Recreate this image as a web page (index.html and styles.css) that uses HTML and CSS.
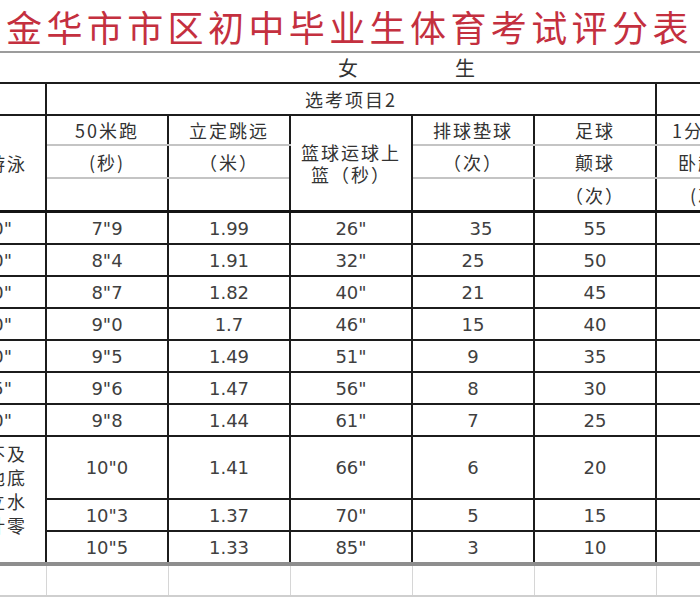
FILE: index.html
```html
<!DOCTYPE html>
<html lang="zh">
<head>
<meta charset="utf-8">
<title>金华市市区初中毕业生体育考试评分表</title>
<link rel="stylesheet" href="styles.css">
</head>
<body>
<div class="sheet">
  <h1 class="title">金华市市区初中毕业生体育考试评分表</h1>
  <table class="grid">
    <colgroup>
      <col class="c-first"><col class="c-mid"><col class="c-mid"><col class="c-mid"><col class="c-mid"><col class="c-mid"><col class="c-last">
    </colgroup>
    <tr class="r-gender">
      <td colspan="7" class="gender"><span class="g-char">女</span><span class="g-char">生</span></td>
    </tr>
    <tr class="r-group">
      <td></td>
      <td colspan="5" class="cjk">选考项目2</td>
      <td></td>
    </tr>
    <tr class="r-ha">
      <td rowspan="3" class="cjk first-head hdr-end">游泳</td>
      <td class="cjk">50米跑</td>
      <td class="cjk">立定跳远</td>
      <td rowspan="3" class="cjk two-line hdr-end">篮球运球上<br>篮（秒）</td>
      <td class="cjk">排球垫球</td>
      <td class="cjk">足球</td>
      <td class="cjk">1分钟仰</td>
    </tr>
    <tr class="r-hb">
      <td class="cjk">(秒)</td>
      <td class="cjk">（米）</td>
      <td class="cjk">（次）</td>
      <td class="cjk">颠球</td>
      <td class="cjk">卧起坐</td>
    </tr>
    <tr class="r-hc">
      <td></td>
      <td></td>
      <td></td>
      <td class="cjk">（次）</td>
      <td class="cjk">(次)</td>
    </tr>
    <tr class="r-data"><td class="first">1'00"</td><td>7"9</td><td>1.99</td><td>26"</td><td class="shift">35</td><td>55</td><td></td></tr>
    <tr class="r-data"><td class="first">1'10"</td><td>8"4</td><td>1.91</td><td>32"</td><td>25</td><td>50</td><td></td></tr>
    <tr class="r-data"><td class="first">1'20"</td><td>8"7</td><td>1.82</td><td>40"</td><td>21</td><td>45</td><td></td></tr>
    <tr class="r-data"><td class="first">1'30"</td><td>9"0</td><td>1.7</td><td>46"</td><td>15</td><td>40</td><td></td></tr>
    <tr class="r-data"><td class="first">1'40"</td><td>9"5</td><td>1.49</td><td>51"</td><td>9</td><td>35</td><td></td></tr>
    <tr class="r-data"><td class="first">1'45"</td><td>9"6</td><td>1.47</td><td>56"</td><td>8</td><td>30</td><td></td></tr>
    <tr class="r-data"><td class="first">1'50"</td><td>9"8</td><td>1.44</td><td>61"</td><td>7</td><td>25</td><td></td></tr>
    <tr class="r-tall">
      <td rowspan="3" class="cjk first-note">途中不及<br>手触池底<br>或站立水<br>中者计零</td>
      <td>10"0</td><td>1.41</td><td>66"</td><td>6</td><td>20</td><td></td>
    </tr>
    <tr class="r-data"><td>10"3</td><td>1.37</td><td>70"</td><td>5</td><td>15</td><td></td></tr>
    <tr class="r-data"><td>10"5</td><td>1.33</td><td>85"</td><td>3</td><td>10</td><td></td></tr>
    <tr class="r-empty"><td></td><td></td><td></td><td></td><td></td><td></td><td></td></tr>
  </table>
</div>
</body>
</html>
```

FILE: styles.css
```css
html, body {
  margin: 0;
  padding: 0;
  background: #ffffff;
}

body {
  font-family: "DejaVu Sans", "Noto Sans CJK SC", sans-serif;
  color: #404040;
}

.sheet {
  width: 700px;
  height: 600px;
  overflow: hidden;
  background: #ffffff;
}

.title {
  margin: 0;
  height: 51px;
  padding: 2px 0 0 6px;
  box-sizing: border-box;
  font-family: "Noto Sans CJK SC", sans-serif;
  font-weight: 400;
  font-size: 36px;
  line-height: 48px;
  letter-spacing: 4.4px;
  color: #c4303f;
  white-space: nowrap;
}

.grid {
  border-collapse: collapse;
  table-layout: fixed;
  width: 836px;
  margin-left: -77px;
}

.c-first, .c-mid { width: 122px; }
.c-last { width: 104px; }

.grid td {
  border: 2px solid #1c1c1c;
  padding: 0;
  text-align: center;
  vertical-align: middle;
  font-size: 18px;
  white-space: nowrap;
  overflow: hidden;
}

.grid td.cjk {
  font-family: "Noto Sans CJK SC", sans-serif;
  letter-spacing: 2px;
  color: #333333;
}

/* gender row */
.r-gender td {
  height: 29px;
  border-top: 2px solid #9c9c9c;
}
.grid td.gender {
  text-align: left;
}
.g-char {
  display: inline-block;
  font-family: "Noto Sans CJK SC", sans-serif;
  font-size: 20px;
  color: #333333;
}
.g-char:first-child { margin-left: 413px; }
.g-char + .g-char { margin-left: 97px; }

.r-group td { height: 30px; }

/* header rows */
.r-ha td { height: 28px; }
.r-hb td { height: 31px; }
.r-hc td { height: 31px; }

.r-ha td, .r-hb td { border-bottom: 2px solid #c4c4c4; }
.r-hb td, .r-hc td { border-top: 2px solid #c4c4c4; }
.r-ha td.hdr-end { border-bottom: 3px solid #141414; }
.r-hc td { border-bottom: 3px solid #141414; }

.grid td.first-head {
  text-align: right;
  padding-right: 18px;
}

.grid td.two-line {
  line-height: 22px;
  white-space: normal;
}

/* data rows */
.r-data td { height: 30px; }
.r-tall td { height: 61px; }

.grid td.first {
  text-align: right;
  padding-right: 33px;
}

.grid td.shift { padding-left: 16px; }

.grid td.first-note {
  text-align: right;
  vertical-align: top;
  padding: 4px 18px 0 0;
  line-height: 24px;
  white-space: normal;
}

/* empty bottom row */
.r-empty td {
  height: 29px;
  border-top: 4px solid #8e8e8e;
  border-left: 1px solid #d6d6d6;
  border-right: 1px solid #d6d6d6;
  border-bottom: 2px solid #cfcfcf;
}
```
